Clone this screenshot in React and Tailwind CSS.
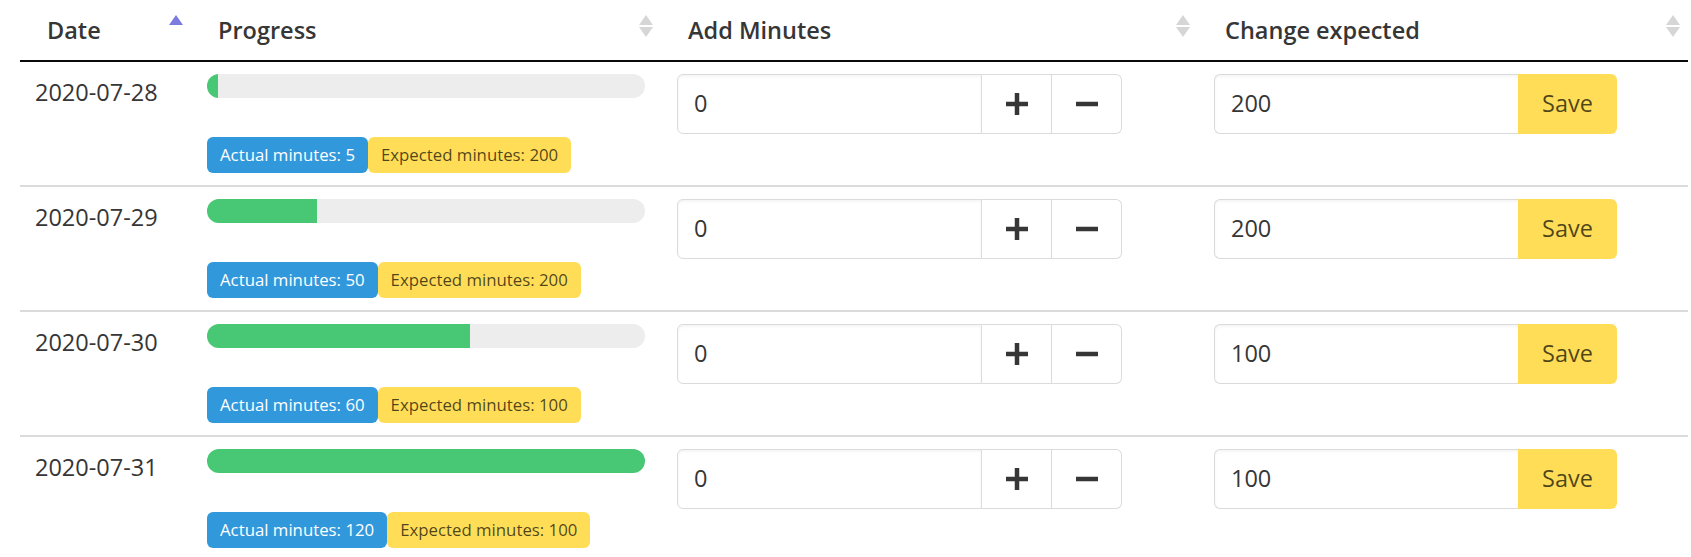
import React from "react";

const rows = [
  { date: "2020-07-28", actual: 5, expected: 200 },
  { date: "2020-07-29", actual: 50, expected: 200 },
  { date: "2020-07-30", actual: 60, expected: 100 },
  { date: "2020-07-31", actual: 120, expected: 100 },
];

function SortIcon({ active }) {
  return (
    <svg width="14" height="22" viewBox="0 0 14 22" className="absolute right-[8px] top-[15px]">
      {active ? (
        <polygon points="7,0 14,10 0,10" fill="#7b7be0" />
      ) : (
        <>
          <polygon points="7,0 14,10 0,10" fill="#d6d6d6" />
          <polygon points="0,12 14,12 7,22" fill="#d6d6d6" />
        </>
      )}
    </svg>
  );
}

function Plus() {
  return (
    <svg width="22" height="22" viewBox="0 0 22 22">
      <rect x="0" y="8.75" width="22" height="4.5" fill="#363636" />
      <rect x="8.75" y="0" width="4.5" height="22" fill="#363636" />
    </svg>
  );
}

function Minus() {
  return (
    <svg width="22" height="22" viewBox="0 0 22 22">
      <rect x="0" y="8.75" width="22" height="4.5" fill="#363636" />
    </svg>
  );
}

export default function App() {
  const font = { fontFamily: '"Open Sans", "Noto Sans", sans-serif' };
  return (
    <div className="bg-white w-[1691px] h-[557px] overflow-hidden pl-[20px] pr-[3px] text-[#363636]" style={font}>
      <table className="table-fixed border-collapse w-[1668px]">
        <colgroup>
          <col className="w-[171px]" />
          <col className="w-[470px]" />
          <col className="w-[537px]" />
          <col className="w-[490px]" />
        </colgroup>
        <thead>
          <tr className="border-b-2 border-[#0a0a0a]">
            {["Date", "Progress", "Add Minutes", "Change expected"].map((h, i) => (
              <th
                key={h}
                className="relative text-left font-semibold text-[23.5px] leading-[36px] pl-[27px] pt-[12px] pb-[12px] text-[#363636]"
              >
                {h}
                <SortIcon active={i === 0} />
              </th>
            ))}
          </tr>
        </thead>
        <tbody>
          {rows.map((r, idx) => {
            const pct = Math.min(100, (r.actual / r.expected) * 100);
            return (
              <tr key={r.date} className={idx < rows.length - 1 ? "border-b-2 border-[#dbdbdb]" : ""}>
                <td className="align-top pt-[12px] pb-[12px] pl-[15px] text-[23.5px] leading-[36px] text-[#363636]">
                  {r.date}
                </td>
                <td className="align-top pt-[12px] pb-[12px] px-[16px]">
                  <div className="h-[24px] w-full rounded-full bg-[#ededed] overflow-hidden">
                    <div className="h-full bg-[#48c774]" style={{ width: `${pct}%` }} />
                  </div>
                  <div className="flex mt-[39px]">
                    <span className="h-[36px] px-[13px] flex items-center rounded-[6px] bg-[#3298dc] text-white text-[16.8px]">
                      Actual minutes: {r.actual}
                    </span>
                    <span className="h-[36px] px-[13px] flex items-center rounded-[6px] bg-[#ffdd57] text-[rgba(0,0,0,0.7)] text-[16.8px]">
                      Expected minutes: {r.expected}
                    </span>
                  </div>
                </td>
                <td className="align-top pt-[12px] pb-[12px] pl-[16px]">
                  <div className="flex h-[60px] w-[445px]">
                    <div className="w-[305px] h-full border-[1.5px] border-[#dbdbdb] rounded-l-[6px] shadow-[inset_0_1.5px_3px_rgba(10,10,10,0.05)] flex items-center pl-[16px] text-[23.5px] text-[#363636]">
                      0
                    </div>
                    <div className="w-[70px] h-full border-y-[1.5px] border-r-[1.5px] border-[#dbdbdb] flex items-center justify-center">
                      <Plus />
                    </div>
                    <div className="w-[70px] h-full border-y-[1.5px] border-r-[1.5px] border-[#dbdbdb] rounded-r-[6px] flex items-center justify-center">
                      <Minus />
                    </div>
                  </div>
                </td>
                <td className="align-top pt-[12px] pb-[12px] pl-[16px]">
                  <div className="flex h-[60px] w-[403px]">
                    <div className="w-[304px] h-full border-[1.5px] border-r-0 border-[#dbdbdb] rounded-l-[6px] shadow-[inset_0_1.5px_3px_rgba(10,10,10,0.05)] flex items-center pl-[16px] text-[23.5px] text-[#363636]">
                      {r.expected}
                    </div>
                    <div className="w-[99px] h-full bg-[#ffdd57] rounded-r-[6px] flex items-center justify-center text-[23.5px] text-[rgba(0,0,0,0.7)]">
                      Save
                    </div>
                  </div>
                </td>
              </tr>
            );
          })}
        </tbody>
      </table>
    </div>
  );
}
